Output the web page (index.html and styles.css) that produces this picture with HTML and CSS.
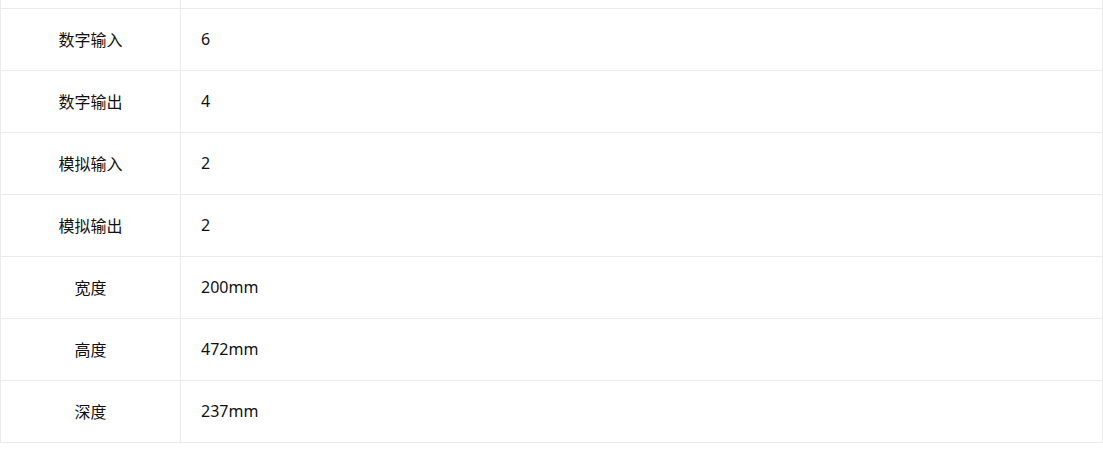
FILE: index.html
```html
<!DOCTYPE html>
<html lang="zh">
<head>
<meta charset="utf-8">
<link rel="stylesheet" href="styles.css">
</head>
<body>
<div class="spec">
  <div class="row row-partial"><div class="label"></div><div class="value"></div></div>
  <div class="row"><div class="label">数字输入</div><div class="value">6</div></div>
  <div class="row"><div class="label">数字输出</div><div class="value">4</div></div>
  <div class="row"><div class="label">模拟输入</div><div class="value">2</div></div>
  <div class="row"><div class="label">模拟输出</div><div class="value">2</div></div>
  <div class="row"><div class="label">宽度</div><div class="value">200mm</div></div>
  <div class="row"><div class="label">高度</div><div class="value">472mm</div></div>
  <div class="row"><div class="label">深度</div><div class="value">237mm</div></div>
</div>
</body>
</html>
```
FILE: styles.css
```css
html, body {
  margin: 0;
  padding: 0;
  background: #fff;
}
body {
  font-family: "Noto Sans", "Noto Sans CJK SC", sans-serif;
  font-size: 16px;
  color: #111;
}
.spec {
  width: 1103px;
  box-sizing: border-box;
  border-left: 1px solid #ebebeb;
  border-right: 1px solid #ebebeb;
}
.row {
  display: flex;
  height: 61px;
  border-bottom: 1px solid #ebebeb;
}
.row-partial {
  height: 8px;
}
.label,
.value {
  display: flex;
  align-items: center;
  padding-bottom: 2px;
  box-sizing: border-box;
}
.row-partial .label,
.row-partial .value {
  padding-bottom: 0;
}
.label {
  width: 180px;
  flex: none;
  border-right: 1px solid #ebebeb;
  justify-content: center;
}
.value {
  flex: 1;
  padding-left: 20px;
}
```
